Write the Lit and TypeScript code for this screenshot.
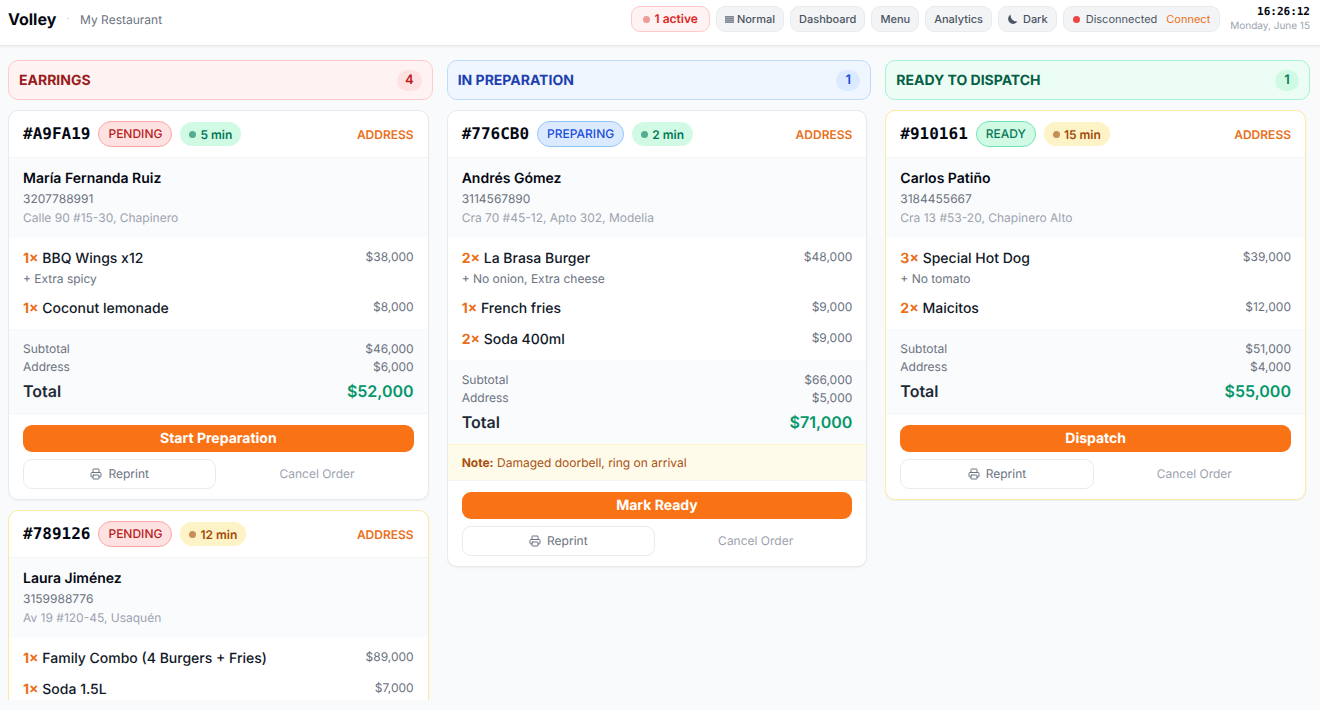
import { LitElement, html, css, svg, nothing } from "lit";
import { customElement, property, state } from "lit/decorators.js";

type Status = "pending" | "preparing" | "ready";

interface Item {
  qty: number;
  name: string;
  price: number;
  extra?: string;
}

interface Order {
  id: string;
  status: Status;
  minutes: number;
  customer: string;
  phone: string;
  address: string;
  items: Item[];
  delivery: number;
  note?: string;
}

interface Column {
  title: string;
  status: Status;
  count: number;
  action: string;
  orders: Order[];
}

const COLUMNS: Column[] = [
  {
    title: "EARRINGS",
    status: "pending",
    count: 4,
    action: "Start Preparation",
    orders: [
      {
        id: "#A9FA19",
        status: "pending",
        minutes: 5,
        customer: "María Fernanda Ruiz",
        phone: "3207788991",
        address: "Calle 90 #15-30, Chapinero",
        items: [
          { qty: 1, name: "BBQ Wings x12", price: 38000, extra: "Extra spicy" },
          { qty: 1, name: "Coconut lemonade", price: 8000 },
        ],
        delivery: 6000,
      },
      {
        id: "#789126",
        status: "pending",
        minutes: 12,
        customer: "Laura Jiménez",
        phone: "3159988776",
        address: "Av 19 #120-45, Usaquén",
        items: [
          { qty: 1, name: "Family Combo (4 Burgers + Fries)", price: 89000 },
          { qty: 1, name: "Soda 1.5L", price: 7000 },
        ],
        delivery: 6000,
      },
    ],
  },
  {
    title: "IN PREPARATION",
    status: "preparing",
    count: 1,
    action: "Mark Ready",
    orders: [
      {
        id: "#776CB0",
        status: "preparing",
        minutes: 2,
        customer: "Andrés Gómez",
        phone: "3114567890",
        address: "Cra 70 #45-12, Apto 302, Modelia",
        items: [
          { qty: 2, name: "La Brasa Burger", price: 48000, extra: "No onion, Extra cheese" },
          { qty: 1, name: "French fries", price: 9000 },
          { qty: 2, name: "Soda 400ml", price: 9000 },
        ],
        delivery: 5000,
        note: "Damaged doorbell, ring on arrival",
      },
    ],
  },
  {
    title: "READY TO DISPATCH",
    status: "ready",
    count: 1,
    action: "Dispatch",
    orders: [
      {
        id: "#910161",
        status: "ready",
        minutes: 15,
        customer: "Carlos Patiño",
        phone: "3184455667",
        address: "Cra 13 #53-20, Chapinero Alto",
        items: [
          { qty: 3, name: "Special Hot Dog", price: 39000, extra: "No tomato" },
          { qty: 2, name: "Maicitos", price: 12000 },
        ],
        delivery: 4000,
      },
    ],
  },
];

const money = (value: number) => "$" + value.toLocaleString("en-US");

const printer = svg`
  <path d="M6 18H4a2 2 0 0 1-2-2v-5a2 2 0 0 1 2-2h16a2 2 0 0 1 2 2v5a2 2 0 0 1-2 2h-2"></path>
  <path d="M6 9V3a1 1 0 0 1 1-1h10a1 1 0 0 1 1 1v6"></path>
  <rect x="6" y="14" width="12" height="8" rx="1"></rect>`;

@customElement("order-card")
export class OrderCard extends LitElement {
  @property({ attribute: false }) order!: Order;
  @property() action = "";

  static styles = css`
    :host {
      display: block;
      flex: none;
    }
    .card {
      background: #fff;
      border: 1px solid #e8eaed;
      border-radius: 10px;
      overflow: hidden;
      box-shadow: 0 1px 2px rgba(0, 0, 0, 0.05);
    }
    .late {
      border-color: #fde9a4;
    }
    .head {
      display: flex;
      align-items: center;
      gap: 8px;
      padding: 10px 14px;
      border-bottom: 1px solid #f3f4f6;
    }
    .id {
      font: 700 16px/26px "DejaVu Sans Mono", monospace;
      color: #030712;
    }
    .status {
      box-sizing: border-box;
      height: 26px;
      padding: 0 9px;
      border: 1px solid;
      border-radius: 13px;
      font-size: 12px;
      line-height: 24px;
      font-weight: 500;
    }
    .pending {
      color: #b91c1c;
      background: #fee2e2;
      border-color: #fca5a5;
    }
    .preparing {
      color: #1d4ed8;
      background: #dbeafe;
      border-color: #93c5fd;
    }
    .ready {
      color: #047857;
      background: #d1fae5;
      border-color: #6ee7b7;
    }
    .timer {
      display: flex;
      align-items: center;
      gap: 4px;
      height: 24px;
      padding: 0 9px;
      border-radius: 12px;
      font-size: 12px;
      font-weight: 600;
      color: #047857;
      background: #d1fae5;
    }
    .timer::before {
      content: "";
      width: 7px;
      height: 7px;
      border-radius: 50%;
      background: currentColor;
      opacity: 0.6;
    }
    .late .timer {
      color: #a14a0b;
      background: #fef3c7;
    }
    .kind {
      margin-left: auto;
      font-size: 12px;
      font-weight: 600;
      color: #ea6f1a;
    }
    .customer {
      padding: 11px 14px 10px;
      background: #fafbfc;
      border-bottom: 1px solid #fcfcfd;
      font-size: 12px;
      line-height: 19px;
      color: #9ca3af;
    }
    .name {
      font-size: 14px;
      line-height: 20px;
      font-weight: 600;
      color: #030712;
    }
    .phone {
      color: #6b7280;
    }
    .items {
      margin: 0;
      padding: 5px 14px;
      list-style: none;
    }
    .item {
      display: flex;
      justify-content: space-between;
      gap: 12px;
      padding: 5px 0;
    }
    .dish {
      font-size: 14px;
      line-height: 21px;
      font-weight: 500;
      color: #111827;
    }
    .qty {
      font-weight: 700;
      color: #ea6f1a;
    }
    .extra,
    .price {
      font-size: 12px;
      line-height: 19px;
      color: #6b7280;
    }
    .price {
      line-height: 18px;
    }
    .totals {
      padding: 10px 14px;
      background: #fafbfc;
      border-top: 1px solid #f8f9fa;
      font-size: 12px;
      line-height: 18px;
      color: #6b7280;
    }
    .row {
      display: flex;
      justify-content: space-between;
    }
    .total {
      margin-top: 4px;
      font-size: 16px;
      line-height: 23px;
      font-weight: 600;
      color: #1f2937;
    }
    .sum {
      color: #059669;
    }
    .note {
      padding: 9px 14px 8px;
      background: #fffbeb;
      border-top: 1px solid #fef3c7;
      font-size: 12px;
      line-height: 18px;
      color: #a8510f;
    }
    .actions {
      display: grid;
      grid-template-columns: 1fr 1fr;
      gap: 7px 4px;
      padding: 11px 14px 10px;
      border-top: 1px solid #f3f4f6;
    }
    button {
      font: 400 12px/18px Inter, sans-serif;
      text-rendering: inherit;
      margin: 0;
      border-radius: 9px;
      cursor: pointer;
    }
    .primary {
      grid-column: 1 / -1;
      height: 27px;
      padding: 0;
      border: 0;
      background: #f97316;
      color: #fff;
      font-size: 14px;
      font-weight: 700;
    }
    .reprint,
    .cancel {
      display: flex;
      align-items: center;
      justify-content: center;
      gap: 6px;
      height: 30px;
      padding: 0;
      border: 1px solid #e8eaed;
      background: #fff;
      color: #6b7280;
    }
    .cancel {
      border-color: transparent;
      background: none;
      color: #9ca3af;
    }
    .icon {
      width: 12px;
      height: 12px;
      fill: none;
      stroke: currentColor;
      stroke-width: 2;
      stroke-linecap: round;
      stroke-linejoin: round;
    }
  `;

  render() {
    const o = this.order;
    const subtotal = o.items.reduce((sum, item) => sum + item.price, 0);
    return html`
      <article class="card ${o.minutes > 10 ? "late" : ""}">
        <header class="head">
          <span class="id">${o.id}</span>
          <span class="status ${o.status}">${o.status.toUpperCase()}</span>
          <span class="timer">${o.minutes} min</span>
          <span class="kind">ADDRESS</span>
        </header>
        <div class="customer">
          <div class="name">${o.customer}</div>
          <div class="phone">${o.phone}</div>
          <div>${o.address}</div>
        </div>
        <ul class="items">
          ${o.items.map(
            (item) => html`<li class="item">
              <div>
                <div class="dish"><span class="qty">${item.qty}×</span> ${item.name}</div>
                ${item.extra ? html`<div class="extra">+ ${item.extra}</div>` : nothing}
              </div>
              <span class="price">${money(item.price)}</span>
            </li>`
          )}
        </ul>
        <div class="totals">
          <div class="row"><span>Subtotal</span><span>${money(subtotal)}</span></div>
          <div class="row"><span>Address</span><span>${money(o.delivery)}</span></div>
          <div class="row total">
            <span>Total</span><span class="sum">${money(subtotal + o.delivery)}</span>
          </div>
        </div>
        ${o.note ? html`<div class="note"><b>Note:</b> ${o.note}</div>` : nothing}
        <div class="actions">
          <button class="primary" type="button">${this.action}</button>
          <button class="reprint" type="button">
            <svg class="icon" viewBox="0 0 24 24" aria-hidden="true">${printer}</svg>Reprint
          </button>
          <button class="cancel" type="button">Cancel Order</button>
        </div>
      </article>
    `;
  }
}

@customElement("app-root")
export class AppRoot extends LitElement {
  @state() columns = COLUMNS;

  static styles = css`
    :host {
      display: flex;
      flex-direction: column;
      height: 100vh;
      overflow: hidden;
      background: #f9fafc;
      font-family: Inter, sans-serif;
      text-rendering: geometricPrecision;
      color: #111827;
    }
    .bar {
      display: flex;
      align-items: center;
      gap: 6px;
      flex: none;
      padding: 4px 10px 11px 8px;
      background: #fff;
      border-bottom: 1px solid #e5e7eb;
      box-shadow: 0 1px 2px rgba(0, 0, 0, 0.05);
    }
    .brand {
      margin: 0;
      font-size: 16px;
      line-height: 22px;
      font-weight: 700;
      color: #030712;
    }
    .dot {
      padding: 0 4px;
      font-size: 13px;
      color: #d1d5db;
    }
    .place {
      font-size: 12px;
      color: #6b7280;
      margin-right: auto;
    }
    .pill {
      display: flex;
      align-items: center;
      box-sizing: border-box;
      height: 26px;
      margin: 0;
      padding: 0 8px;
      border: 1px solid #e9ebee;
      border-radius: 9px;
      background: #f3f4f6;
      font: 500 11px/16px Inter, sans-serif;
      text-rendering: inherit;
      color: #4b5563;
      text-decoration: none;
      white-space: nowrap;
    }
    button.pill {
      cursor: pointer;
    }
    .active {
      gap: 5px;
      padding: 0 11px;
      border-color: #fecaca;
      background: #fef2f2;
      font-size: 12px;
      font-weight: 600;
      color: #dc2626;
    }
    .light {
      width: 7px;
      height: 7px;
      border-radius: 50%;
      background: #f09a9a;
    }
    .off {
      background: #ef4444;
    }
    .rows {
      width: 9px;
      height: 9px;
      margin-right: 3px;
      fill: currentColor;
    }
    .moon {
      width: 11px;
      height: 11px;
      margin-right: 5px;
      fill: currentColor;
    }
    .link {
      gap: 6px;
      padding: 0 9px;
      font-weight: 400;
    }
    .connect {
      margin: 0 0 0 3px;
      padding: 0;
      border: 0;
      background: none;
      font: 400 11px/16px Inter, sans-serif;
      text-rendering: inherit;
      color: #ea6f1a;
      cursor: pointer;
    }
    .clock {
      margin-left: 4px;
      text-align: right;
      font-size: 10px;
      line-height: 15px;
      color: #9ca3af;
      white-space: nowrap;
    }
    .time {
      display: block;
      font-family: "DejaVu Sans Mono", monospace;
      font-size: 11px;
      font-weight: 700;
      color: #030712;
    }
    .board {
      display: grid;
      grid-template-columns: repeat(3, minmax(0, 1fr));
      gap: 14px;
      flex: 1;
      min-height: 0;
      padding: 14px 10px 10px 8px;
    }
    .column {
      display: flex;
      flex-direction: column;
      gap: 10px;
      min-height: 0;
    }
    .title {
      display: flex;
      align-items: center;
      justify-content: space-between;
      box-sizing: border-box;
      flex: none;
      height: 40px;
      padding: 0 10px;
      border: 1px solid;
      border-radius: 10px;
    }
    .label {
      margin: 0;
      font-size: 14px;
      line-height: 21px;
      font-weight: 700;
    }
    .count {
      min-width: 8px;
      padding: 0 8px;
      border-radius: 11px;
      text-align: center;
      font-size: 13px;
      line-height: 21px;
      font-weight: 600;
    }
    .pending {
      color: #991b1b;
      background: #fef2f2;
      border-color: #fecaca;
    }
    .pending .count {
      background: #fee2e2;
      color: #b91c1c;
    }
    .preparing {
      color: #1e40af;
      background: #eff6ff;
      border-color: #bfdbfe;
    }
    .preparing .count {
      background: #dbeafe;
      color: #1d4ed8;
    }
    .ready {
      color: #065f46;
      background: #ecfdf5;
      border-color: #a7f3d0;
    }
    .ready .count {
      background: #d1fae5;
      color: #047857;
    }
    .list {
      display: flex;
      flex-direction: column;
      gap: 10px;
      flex: 1;
      min-height: 0;
      padding-right: 4px;
      overflow-y: auto;
      scrollbar-width: none;
    }
  `;

  render() {
    return html`
      <header class="bar">
        <h1 class="brand">Volley</h1>
        <span class="dot">·</span>
        <span class="place">My Restaurant</span>
        <span class="pill active"><i class="light"></i>1 active</span>
        <button class="pill" type="button">
          <svg class="rows" viewBox="0 0 9 9" aria-hidden="true">
            <path d="M0 1h9v7H0z" opacity=".5"></path>
            <path d="M0 1h9v1H0zM0 3h9v1H0zM0 5h9v1H0zM0 7h9v1H0z" opacity=".35"></path>
          </svg>Normal
        </button>
        <a class="pill" href="#dashboard">Dashboard</a>
        <a class="pill" href="#menu">Menu</a>
        <a class="pill" href="#analytics">Analytics</a>
        <button class="pill" type="button">
          <svg class="moon" viewBox="0 0 24 24" aria-hidden="true">
            <path d="M8 1A11 11 0 1 0 23 16 13 13 0 0 1 8 1z"></path>
          </svg>Dark
        </button>
        <div class="pill link">
          <i class="light off"></i><span>Disconnected</span>
          <button class="connect" type="button">Connect</button>
        </div>
        <div class="clock"><time class="time">16:26:12</time>Monday, June 15</div>
      </header>
      <main class="board">
        ${this.columns.map(
          (column) => html`<section class="column">
            <div class="title ${column.status}">
              <h2 class="label">${column.title}</h2>
              <span class="count">${column.count}</span>
            </div>
            <div class="list">
              ${column.orders.map(
                (order) => html`<order-card .order=${order} .action=${column.action}></order-card>`
              )}
            </div>
          </section>`
        )}
      </main>
    `;
  }
}
